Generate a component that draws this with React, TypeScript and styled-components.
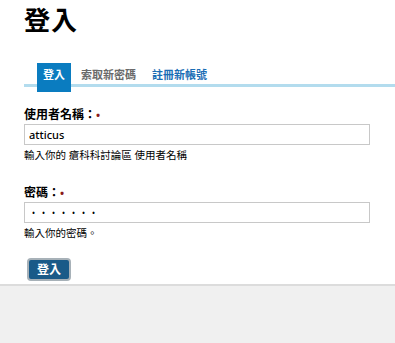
import styled, { createGlobalStyle } from 'styled-components';

const GlobalStyle = createGlobalStyle`
  html, body {
    margin: 0;
    padding: 0;
    background: #ffffff;
  }
  body {
    font-family: "Noto Sans", "Noto Sans CJK TC", sans-serif;
    color: #000;
  }
`;

const Page = styled.div`
  display: flex;
  flex-direction: column;
  min-height: 343px;
`;

const Main = styled.div`
  padding: 5px 0 0 24px;
  flex: 0 0 auto;
`;

const Title = styled.h1`
  margin: 0;
  font-size: 26px;
  line-height: 30px;
  font-weight: 700;
  letter-spacing: 1px;
`;

const TabBar = styled.ul`
  list-style: none;
  margin: 28px 0 0 0;
  padding: 0 0 0 13px;
  height: 21px;
  display: flex;
  align-items: flex-start;
  gap: 4px;
  border-bottom: 3px solid #b3dcee;
`;

const Tab = styled.li<{ $active?: boolean; $color?: string }>`
  height: ${(p) => (p.$active ? '29px' : '21px')};
  padding: 5px 6px 0;
  box-sizing: border-box;
  font-size: 11px;
  line-height: 14px;
  font-weight: 700;
  background: ${(p) => (p.$active ? '#0a7cc0' : 'transparent')};
  color: ${(p) => (p.$active ? '#ffffff' : p.$color || '#666666')};
  cursor: pointer;
`;

const Form = styled.form`
  margin-top: 20px;
  display: flex;
  flex-direction: column;
`;

const Field = styled.div<{ $gap?: number }>`
  display: flex;
  flex-direction: column;
  margin-bottom: ${(p) => p.$gap ?? 0}px;
`;

const Label = styled.label`
  font-size: 12px;
  line-height: 16px;
  font-weight: 700;
  margin-bottom: 1px;
`;

const Required = styled.span`
  color: #8b1a1a;
  font-size: 11px;
  vertical-align: top;
`;

const Input = styled.input`
  width: 346px;
  height: 21px;
  box-sizing: border-box;
  border: 1px solid #c8c8c8;
  padding: 0 4px;
  font-family: "Noto Sans", "Noto Sans CJK TC", sans-serif;
  font-size: 11px;
  font-weight: 500;
  color: #000;
  outline: none;
  &[type='password'] {
    font-size: 8px;
    letter-spacing: 7px;
    padding-left: 7px;
  }
`;

const Help = styled.div`
  font-size: 10.5px;
  line-height: 14px;
  margin-top: 3px;
`;

const Submit = styled.button`
  margin: 0 0 3px 3px;
  align-self: flex-start;
  height: 23px;
  padding: 0 8px;
  background: #195a88;
  color: #ffffff;
  border: 2px solid #a7b1b8;
  border-radius: 4px;
  font-family: "Noto Sans", "Noto Sans CJK TC", sans-serif;
  font-size: 12px;
  font-weight: 700;
  line-height: 17px;
`;

const Footer = styled.div`
  flex: 1 1 auto;
  background: #f0f0f0;
  border-top: 2px solid #dcdcdc;
`;

export default function App() {
  return (
    <>
      <GlobalStyle />
      <Page>
        <Main>
          <Title>登入</Title>
          <TabBar>
            <Tab $active>登入</Tab>
            <Tab $color="#6a6a6a">索取新密碼</Tab>
            <Tab $color="#1a6db5">註冊新帳號</Tab>
          </TabBar>
          <Form onSubmit={(e) => e.preventDefault()}>
            <Field $gap={23}>
              <Label>
                使用者名稱：<Required>•</Required>
              </Label>
              <Input type="text" defaultValue="atticus" />
              <Help>輸入你的 瘡科科討論區 使用者名稱</Help>
            </Field>
            <Field $gap={18}>
              <Label>
                密碼：<Required>•</Required>
              </Label>
              <Input type="password" defaultValue="abcdefg" />
              <Help>輸入你的密碼。</Help>
            </Field>
            <Submit type="submit">登入</Submit>
          </Form>
        </Main>
        <Footer />
      </Page>
    </>
  );
}
